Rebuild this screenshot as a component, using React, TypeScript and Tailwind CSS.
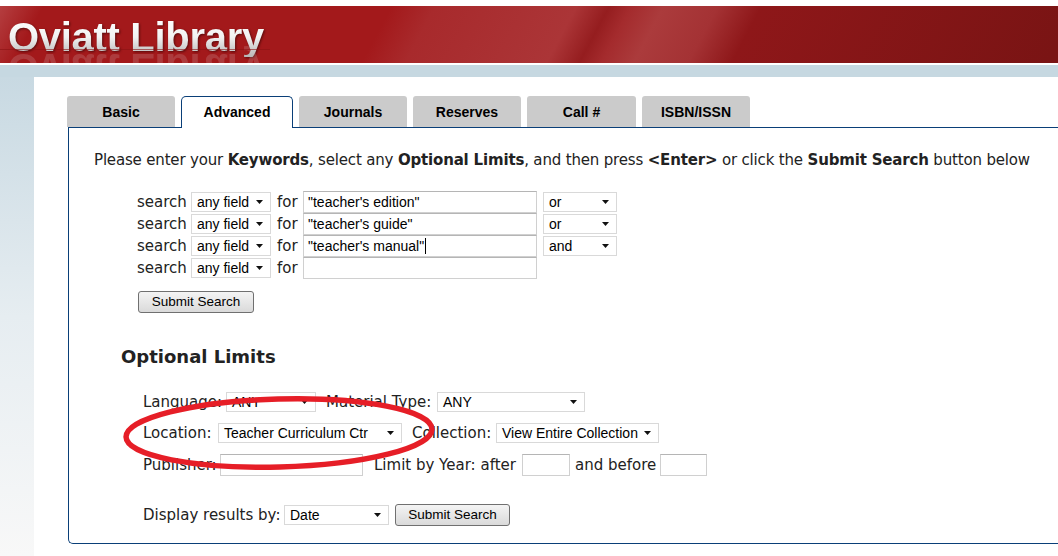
import React from "react";
import clsx from "clsx";

const verdana = "font-['DejaVu_Sans',Verdana,sans-serif]";
const arial = "font-['Liberation_Sans',Arial,sans-serif]";

type Tab = { label: string; w: string; active?: boolean };

const tabs: Tab[] = [
  { label: "Basic", w: "w-[108px]" },
  { label: "Advanced", w: "w-[112px]", active: true },
  { label: "Journals", w: "w-[108px]" },
  { label: "Reserves", w: "w-[108px]" },
  { label: "Call #", w: "w-[109px]" },
  { label: "ISBN/ISSN", w: "w-[108px]" },
];

const searchRows = [
  { text: "\"teacher's edition\"", op: "or" },
  { text: "\"teacher's guide\"", op: "or" },
  { text: "\"teacher's manual\"", op: "and", caret: true },
  { text: "", op: null },
];

function Arrow() {
  return (
    <svg width="7" height="4" viewBox="0 0 7 4" className="shrink-0">
      <path d="M0 0h7L3.5 4z" fill="#111" />
    </svg>
  );
}

function FakeSelect({ value, className }: { value: string; className: string }) {
  return (
    <div
      className={clsx(
        "flex h-[20px] shrink-0 items-center justify-between border border-[#d9d9d9] bg-white pl-[5px] pr-[7px] text-[14px] leading-none text-black",
        arial,
        className
      )}
    >
      <span className="whitespace-nowrap">{value}</span>
      <Arrow />
    </div>
  );
}

function FakeInput({ value = "", caret, className }: { value?: string; caret?: boolean; className: string }) {
  return (
    <div
      className={clsx(
        "flex h-[22px] shrink-0 items-center border border-[#d0d0d0] border-t-[#b5b5b5] bg-white pl-[4px] text-[14px] leading-none text-black",
        arial,
        className
      )}
    >
      <span className="whitespace-nowrap">{value}</span>
      {caret && <span className="ml-px h-[16px] w-px bg-black" />}
    </div>
  );
}

function SubmitButton({ className }: { className?: string }) {
  return (
    <button
      className={clsx(
        "flex h-[22px] items-center justify-center rounded-[3px] border border-[#707070] bg-gradient-to-b from-[#f4f4f4] to-[#dadada] text-[13.5px] leading-none text-black",
        arial,
        className
      )}
    >
      Submit Search
    </button>
  );
}

function Header() {
  return (
    <header className="relative h-[57px] overflow-hidden bg-[linear-gradient(118deg,#b53e40_0%,#a3191b_4%,#a3191b_36%,#a82a2c_40%,#ab3537_53%,#951d1f_56%,#a42b2d_58%,#ab3b3c_61%,#a43234_66%,#8e1719_70%,#7a1414_99%)] pl-[8px] pt-[11px]">
      <h1
        className={clsx(
          "bg-gradient-to-b from-white via-[#f2f2f2] to-[#b5b5b5] bg-clip-text text-[40px] font-bold leading-none tracking-[-0.3px] text-transparent drop-shadow-[1px_1px_1px_rgba(40,0,0,0.6)]",
          arial
        )}
      >
        Oviatt Library
      </h1>
      {/* reflection under the logo */}
      <span
        aria-hidden
        className={clsx(
          "absolute left-[8px] top-[42px] -scale-y-100 text-[40px] font-bold leading-none tracking-[-0.3px] text-[#d9c4c4] opacity-20",
          arial
        )}
      >
        Oviatt Library
      </span>
      <div className="absolute left-0 top-[43px] h-px w-[270px] bg-[#8a1214]/60" />
    </header>
  );
}

function Tabs() {
  return (
    <div className="relative z-10 -mb-px ml-[33px] flex items-end gap-[6px]">
      {tabs.map((t) =>
        t.active ? (
          <div
            key={t.label}
            className={clsx(
              "flex h-[32px] items-center justify-center rounded-t-[5px] border border-b-0 border-[#0a3f78] bg-white text-[14px] font-bold text-black",
              arial,
              t.w
            )}
          >
            {t.label}
          </div>
        ) : (
          <div
            key={t.label}
            className={clsx(
              "mb-px flex h-[31px] items-center justify-center rounded-t-[3px] bg-[#cbcbcb] pt-[1px] text-[14px] font-bold text-black",
              arial,
              t.w
            )}
          >
            {t.label}
          </div>
        )
      )}
    </div>
  );
}

function Label({ children, className }: { children: React.ReactNode; className: string }) {
  return <span className={clsx("shrink-0 whitespace-nowrap", className)}>{children}</span>;
}

function SearchPanel() {
  return (
    <div className={clsx("rounded-bl-[5px] border border-r-0 border-[#0a3f78] pb-[17px] pl-[25px] pt-[23px] text-[15px] text-[#222]", verdana)}>
      <p className="h-[18px] whitespace-nowrap leading-[18px] tracking-[-0.17px]">
        Please enter your <b>Keywords</b>, select any <b>Optional Limits</b>, and then press{" "}
        <b>&lt;Enter&gt;</b> or click the <b>Submit Search</b> button below
      </p>

      <div className="ml-[43px] mt-[22px]">
        {searchRows.map((r, i) => (
          <div key={i} className="flex h-[22px] items-center">
            <Label className="w-[54px]">search</Label>
            <FakeSelect value="any field" className="w-[80px]" />
            <Label className="ml-[6px] w-[26px]">for</Label>
            <FakeInput value={r.text} caret={r.caret} className="w-[234px]" />
            {r.op && <FakeSelect value={r.op} className="ml-[6px] w-[74px]" />}
          </div>
        ))}
      </div>

      <SubmitButton className="ml-[44px] mt-[12px] w-[116px]" />

      <h2 className="ml-[27px] mt-[33px] h-[22px] text-[18px] font-bold leading-[22px] text-[#222]">Optional Limits</h2>

      <div className="ml-[49px]">
        <div className="mt-[23px] flex h-[22px] items-center">
          <Label className="w-[83px]">Language:</Label>
          <FakeSelect value="ANY" className="w-[90px]" />
          <Label className="ml-[10px] w-[111px]">Material Type:</Label>
          <FakeSelect value="ANY" className="w-[148px]" />
        </div>
        <div className="mt-[9px] flex h-[22px] items-center">
          <Label className="w-[75px]">Location:</Label>
          <FakeSelect value="Teacher Curriculum Ctr" className="w-[184px]" />
          <Label className="ml-[10px] w-[84px]">Collection:</Label>
          <FakeSelect value="View Entire Collection" className="w-[163px]" />
        </div>
        <div className="mt-[10px] flex h-[22px] items-center">
          <Label className="w-[77px]">Publisher:</Label>
          <FakeInput className="w-[143px]" />
          <Label className="ml-[11px] w-[148px]">Limit by Year: after</Label>
          <FakeInput className="w-[48px]" />
          <Label className="ml-[5px] w-[85px]">and before</Label>
          <FakeInput className="w-[47px]" />
        </div>
        <div className="mt-[28px] flex h-[22px] items-center">
          <Label className="w-[141px]">Display results by:</Label>
          <FakeSelect value="Date" className="w-[105px]" />
          <SubmitButton className="ml-[6px] w-[115px]" />
        </div>
      </div>
    </div>
  );
}

export default function App() {
  return (
    <div className="relative h-[556px] w-[1058px] overflow-hidden bg-white">
      <div className="h-[6px] bg-white" />
      <Header />
      <div className="h-[2px] bg-white" />
      <div className="h-[12px] bg-[#c6d8e1]" />
      <div className="flex">
        <aside className="h-[479px] w-[34px] shrink-0 bg-gradient-to-b from-[#c8d9e2] via-[#e6edf1] to-[#f8f8f8]" />
        <main className="flex-1 pt-[19px]">
          <Tabs />
          <div className="ml-[34px]">
            <SearchPanel />
          </div>
        </main>
      </div>

      {/* red hand-drawn circle around the Location row */}
      <svg className="pointer-events-none absolute left-0 top-0" width="1058" height="556">
        <ellipse
          cx="279"
          cy="433"
          rx="153"
          ry="34"
          transform="rotate(-1.5 279 433)"
          fill="none"
          stroke="#e61e27"
          strokeWidth="5.5"
        />
      </svg>
    </div>
  );
}
